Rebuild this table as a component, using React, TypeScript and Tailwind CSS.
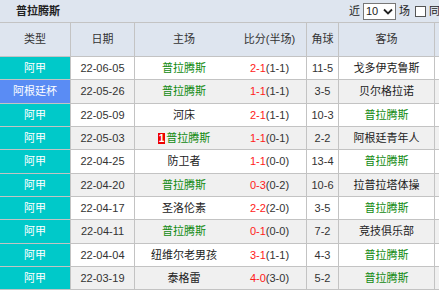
import React from 'react';

type Match = {
  type: string;
  date: string;
  home: string;
  homeTeam?: boolean;
  badge?: string;
  score: string;
  half: string;
  corner: string;
  away: string;
};

const TEAM = '普拉腾斯';

const matches: Match[] = [
  { type: '阿甲', date: '22-06-05', home: TEAM, score: '2-1', half: '(1-1)', corner: '11-5', away: '戈多伊克鲁斯' },
  { type: '阿根廷杯', date: '22-05-26', home: TEAM, score: '1-1', half: '(1-1)', corner: '3-5', away: '贝尔格拉诺' },
  { type: '阿甲', date: '22-05-09', home: '河床', score: '2-1', half: '(1-1)', corner: '10-3', away: TEAM },
  { type: '阿甲', date: '22-05-03', home: TEAM, badge: '1', score: '1-1', half: '(0-1)', corner: '2-2', away: '阿根廷青年人' },
  { type: '阿甲', date: '22-04-25', home: '防卫者', score: '1-1', half: '(0-0)', corner: '13-4', away: TEAM },
  { type: '阿甲', date: '22-04-20', home: TEAM, score: '0-3', half: '(0-2)', corner: '10-6', away: '拉普拉塔体操' },
  { type: '阿甲', date: '22-04-17', home: '圣洛伦素', score: '2-2', half: '(2-0)', corner: '3-5', away: TEAM },
  { type: '阿甲', date: '22-04-11', home: TEAM, score: '0-1', half: '(0-0)', corner: '7-2', away: '竞技俱乐部' },
  { type: '阿甲', date: '22-04-04', home: '纽维尔老男孩', score: '3-1', half: '(1-1)', corner: '4-3', away: TEAM },
  { type: '阿甲', date: '22-03-19', home: '泰格雷', score: '4-0', half: '(3-0)', corner: '5-2', away: TEAM },
];

const grid = 'grid grid-cols-[71px_64px_98px_74px_32px_96px_20px]';
const cell = 'flex items-center justify-center border-r border-[#c3c3c3] whitespace-nowrap';

const TeamName = ({ name }: { name: string }) => (
  <span className={name === TEAM ? 'text-[#108a10]' : 'text-[#222]'}>{name}</span>
);

export default function App() {
  return (
    <div className="w-[439px] h-[290px] overflow-hidden bg-white text-[11px] text-[#333] font-['Liberation_Sans','Noto_Sans_CJK_SC',sans-serif]">
      {/* Title bar */}
      <div className="h-[23px] flex items-center justify-between bg-[#dee5ef] border-b border-[#c3c3c3] pl-[16px]">
        <span className="font-bold text-[#222]">普拉腾斯</span>
        <div className="flex items-center gap-[3px] mr-[-12px] text-[#222]">
          <span>近</span>
          <div className="h-[17px] w-[33px] flex items-center justify-between bg-white border border-[#777] px-[2px]">
            <span>10</span>
            <svg width="10" height="7" viewBox="0 0 10 7">
              <path d="M1 1.5 L5 5.5 L9 1.5" fill="none" stroke="#222" strokeWidth="1.8" />
            </svg>
          </div>
          <span>场</span>
          <span className="w-[11px] h-[11px] border border-[#555] bg-white ml-[2px]" />
          <span>同场</span>
        </div>
      </div>

      {/* Header */}
      <div className={`${grid} h-[34px] bg-[#dee5ef] border-b border-[#c3c3c3]`}>
        <div className={cell}>类型</div>
        <div className={cell}>日期</div>
        <div className={`${cell} border-r-0`}>主场</div>
        <div className={cell}>比分(半场)</div>
        <div className={cell}>角球</div>
        <div className={cell}>客场</div>
        <div className={cell}></div>
      </div>

      {/* Rows */}
      {matches.map((m, i) => (
        <div
          key={i}
          className={`${grid} h-[23.33px] border-b border-[#c3c3c3] ${i % 2 === 1 ? 'bg-[#f0f0f0]' : 'bg-white'}`}
        >
          <div className={`${cell} text-white ${m.type === '阿甲' ? 'bg-[#00c9c9]' : 'bg-[#5a8cf4]'}`}>{m.type}</div>
          <div className={cell}>{m.date}</div>
          <div className={`${cell} border-r-0`}>
            {m.badge && (
              <span className="bg-[#ee0000] text-white font-bold text-[10px] leading-[11px] px-[1px] mr-[1px]">{m.badge}</span>
            )}
            <TeamName name={m.home} />
          </div>
          <div className={cell}>
            <span className="text-[#ff1a1a]">{m.score}</span>
            <span>{m.half}</span>
          </div>
          <div className={cell}>{m.corner}</div>
          <div className={cell}>
            <TeamName name={m.away} />
          </div>
          <div className={cell}></div>
        </div>
      ))}
    </div>
  );
}
